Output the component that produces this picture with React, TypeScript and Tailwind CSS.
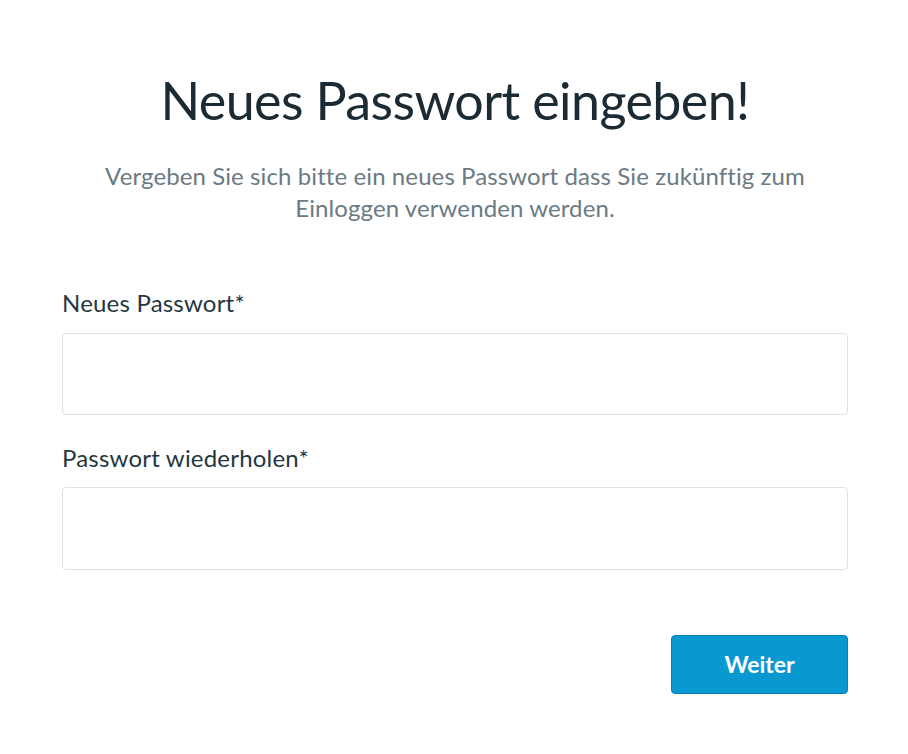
export default function App() {
  return (
    <div className="min-h-screen w-full bg-white pl-[62px] pr-[60px] pt-[68px] font-['Lato',sans-serif]">
      <h1 className="text-center text-[52px] leading-[64px] tracking-[-0.6px] text-[#1b2a33]">
        Neues Passwort eingeben!
      </h1>
      <p className="mx-auto mt-[28px] max-w-[760px] text-center text-[24px] leading-[32px] text-[#6b7a83] tracking-[0.1px]">
        Vergeben Sie sich bitte ein neues Passwort dass Sie zukünftig zum Einloggen verwenden werden.
      </p>

      <form className="mt-[64px] flex flex-col">
        <label className="text-[24px] leading-[30px] tracking-[0.2px] text-[#243741]">Neues Passwort*</label>
        <input
          type="password"
          className="mt-[15px] h-[82px] w-full rounded-[4px] border border-[#dde2e6] px-4 outline-none"
        />
        <label className="mt-[28px] text-[24px] leading-[30px] tracking-[0.2px] text-[#243741]">Passwort wiederholen*</label>
        <input
          type="password"
          className="mt-[14px] h-[83px] w-full rounded-[4px] border border-[#dde2e6] px-4 outline-none"
        />
        <div className="mt-[65px] flex justify-end">
          <button
            type="button"
            className="h-[59px] w-[177px] rounded-[4px] border border-[#0b7fb3] bg-[#0a98d1] text-[23px] font-bold text-white"
          >
            Weiter
          </button>
        </div>
      </form>
    </div>
  );
}
